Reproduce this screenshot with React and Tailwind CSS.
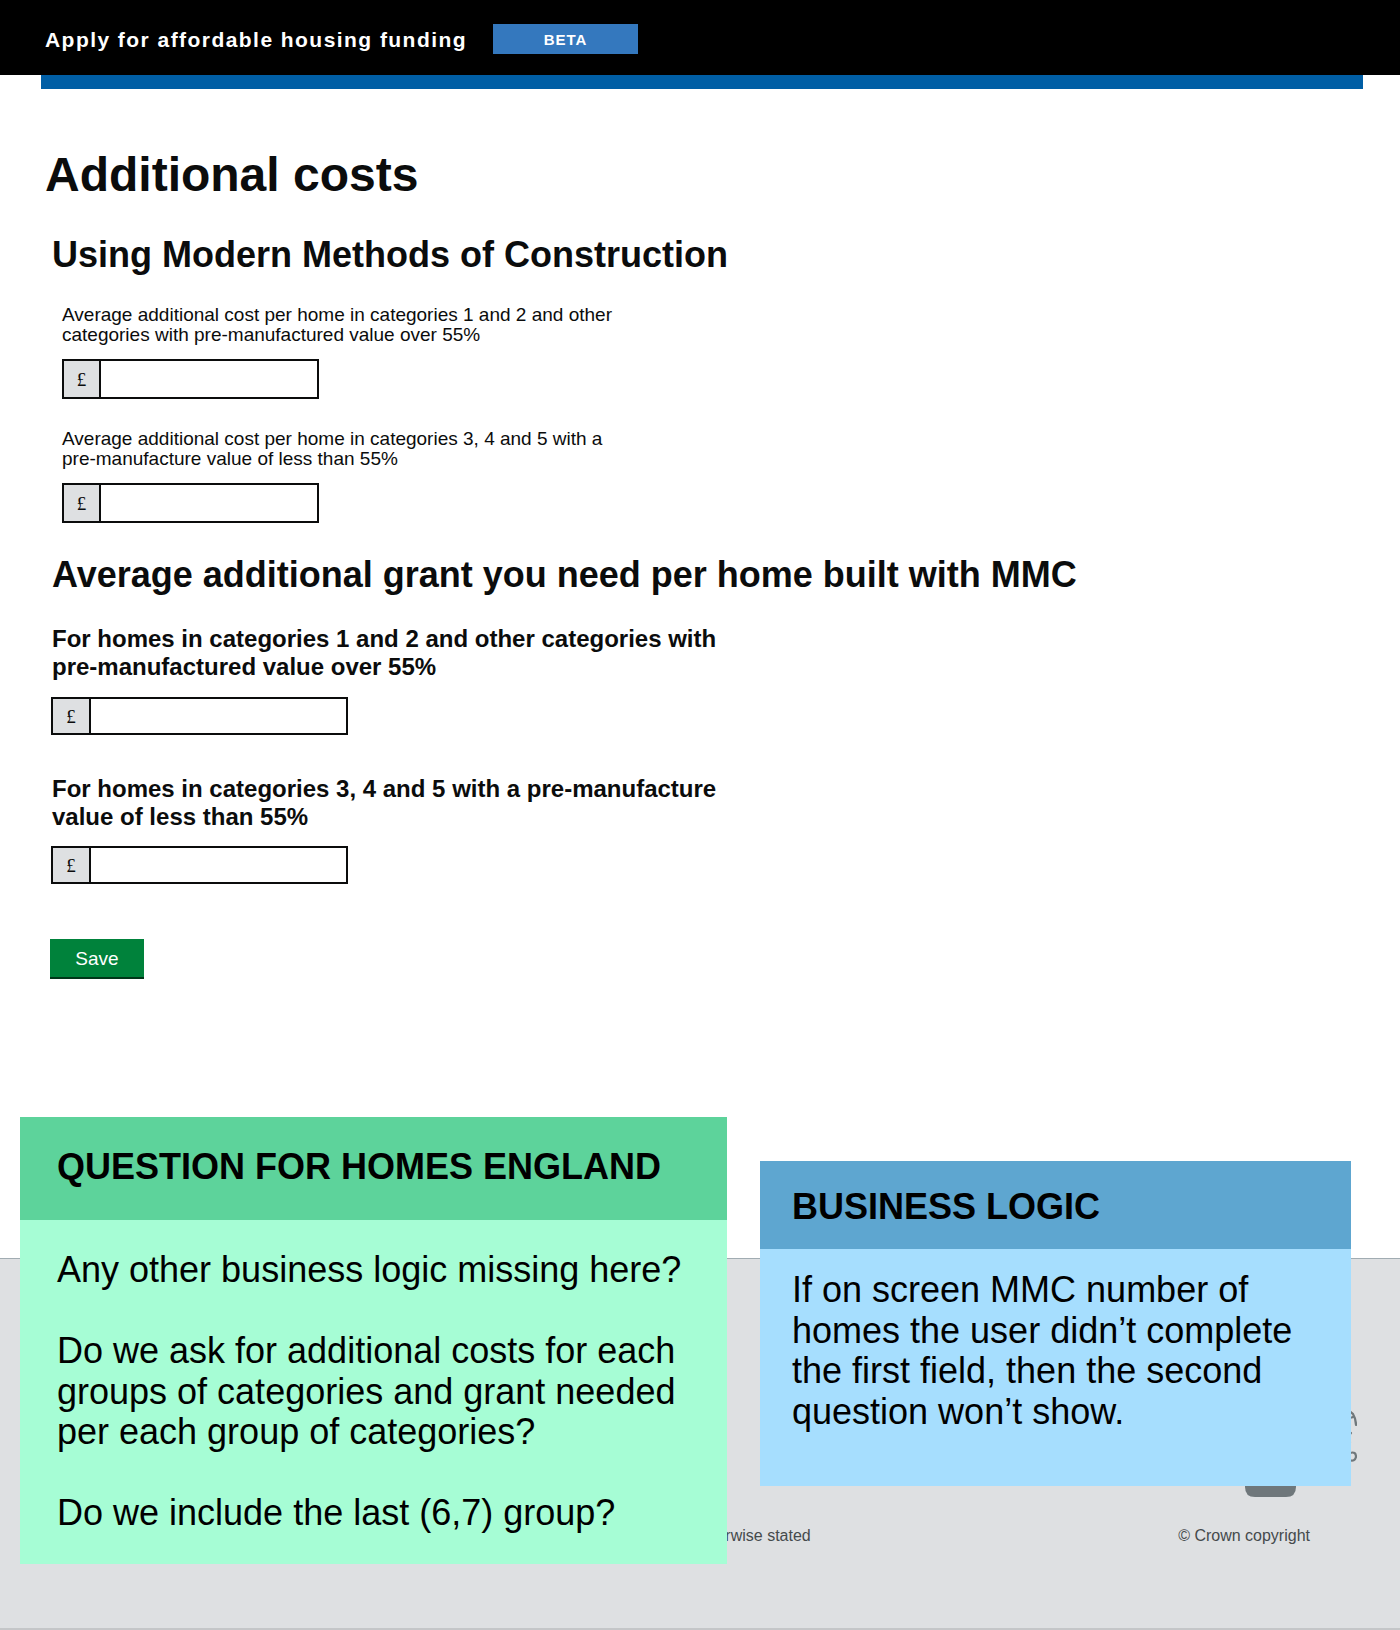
import React from "react";

function MoneyInputSmall() {
  return (
    <div className="flex w-[257px] h-[40px] border-2 border-[#0b0c0c] bg-white">
      <div className="w-[37px] h-full bg-[#dee0e2] border-r-2 border-[#0b0c0c] flex items-center justify-center text-[19px] leading-none text-[#0b0c0c] font-['Liberation_Serif','Times_New_Roman',serif]">
        £
      </div>
      <input type="text" className="flex-1 min-w-0 h-full border-0 outline-none bg-white px-2 text-[19px]" />
    </div>
  );
}

function MoneyInputWide() {
  return (
    <div className="flex w-[297px] h-[38px] border-2 border-[#0b0c0c] bg-white">
      <div className="w-[38px] h-full bg-[#dee0e2] border-r-2 border-[#0b0c0c] flex items-center justify-center text-[19px] leading-none text-[#0b0c0c] font-['Liberation_Serif','Times_New_Roman',serif]">
        £
      </div>
      <input type="text" className="flex-1 min-w-0 h-full border-0 outline-none bg-white px-2 text-[19px]" />
    </div>
  );
}

function Crest() {
  return (
    <svg width="172" height="140" viewBox="0 0 172 140" fill="none">
      <g fill="#6f777b">
        <path d="M60 112 h51 v18 q0 10 -10 10 h-31 q-10 0 -10 -10 z" />
        <path d="M70 40 h32 v40 q-16 16 -32 0 z" />
        <circle cx="86" cy="26" r="12" />
      </g>
      <g stroke="#6f777b" strokeWidth="2.2" fill="none" strokeLinecap="round">
        <path d="M156 57 q7 -6 12 0 q3 5 3 11" />
        <path d="M168 60 q-4 2 -6 -2" />
        <path d="M166 76 q-4 4 -1 9" />
        <path d="M165 96 q6 -2 6 4 q-1 5 -7 3" />
        <path d="M30 60 q-10 20 0 40" />
        <path d="M142 60 q10 20 0 40" />
      </g>
    </svg>
  );
}

function OglLogo() {
  return (
    <svg width="41" height="17" viewBox="0 0 41 17" fill="none">
      <g stroke="#454a4c" strokeWidth="2.5" fill="none">
        <ellipse cx="9" cy="8.5" rx="6.5" ry="6.5" />
        <ellipse cx="26" cy="8.5" rx="6.5" ry="6.5" />
      </g>
    </svg>
  );
}

export default function App() {
  return (
    <div className="relative w-[1400px] h-[1630px] bg-white text-[#0b0c0c] font-['Liberation_Sans',Arial,sans-serif] overflow-hidden">
      {/* Header */}
      <header className="h-[75px] bg-black flex">
        <div className="w-[493px] pl-[45px] pt-[28px]">
          <span className="block text-[21px] leading-[24px] font-bold text-white tracking-[1.45px] whitespace-nowrap">
            Apply for affordable housing funding
          </span>
        </div>
        <div className="mt-[24px] w-[145px] h-[30px] bg-[#3478be] flex items-center justify-center text-white text-[15px] leading-none font-bold tracking-[1px]">
          BETA
        </div>
      </header>
      <div className="ml-[41px] w-[1322px] h-[14px] bg-[#005ea5]" />

      {/* Main */}
      <main className="h-[1169px] flex flex-col items-start">
        <h1 className="ml-[45px] mt-[62px] text-[48px] leading-[48px] font-bold">Additional costs</h1>

        <h2 className="ml-[52px] mt-[36px] text-[36px] leading-[40px] font-bold whitespace-nowrap">
          Using Modern Methods of Construction
        </h2>

        <label className="ml-[62px] mt-[30px] w-[600px] text-[19px] leading-[20px]">
          Average additional cost per home in categories 1 and 2 and other categories with{" "}
          <span className="whitespace-nowrap">pre-manufactured</span> value over 55%
        </label>
        <div className="ml-[62px] mt-[14px]">
          <MoneyInputSmall />
        </div>

        <label className="ml-[62px] mt-[30px] w-[600px] text-[19px] leading-[20px]">
          Average additional cost per home in categories 3, 4 and 5 with a{" "}
          <span className="whitespace-nowrap">pre-manufacture</span> value of less than 55%
        </label>
        <div className="ml-[62px] mt-[14px]">
          <MoneyInputSmall />
        </div>

        <h2 className="ml-[52px] mt-[32px] text-[36px] leading-[40px] font-bold whitespace-nowrap">
          Average additional grant you need per home built with MMC
        </h2>

        <label className="ml-[52px] mt-[30px] w-[700px] text-[24px] leading-[28px] font-bold">
          For homes in categories 1 and 2 and other categories with{" "}
          <span className="whitespace-nowrap">pre-manufactured</span> value over 55%
        </label>
        <div className="ml-[51px] mt-[16px]">
          <MoneyInputWide />
        </div>

        <label className="ml-[52px] mt-[40px] w-[700px] text-[24px] leading-[28px] font-bold">
          For homes in categories 3, 4 and 5 with a{" "}
          <span className="whitespace-nowrap">pre-manufacture</span> value of less than 55%
        </label>
        <div className="ml-[51px] mt-[15px]">
          <MoneyInputWide />
        </div>

        <button className="ml-[50px] mt-[55px] w-[94px] h-[38px] bg-[#00823b] text-white text-[19px] leading-none shadow-[0_2px_0_#003618]">
          Save
        </button>
      </main>

      {/* Footer */}
      <footer className="h-[372px] bg-[#dee0e2] border-t border-b-2 border-t-[#a1acb2] border-b-[#c4c6c8] flex items-start justify-between pt-[98px] pl-[45px] pr-[43px]">
        <div className="mt-[169px] flex items-center">
          <OglLogo />
          <span className="ml-[39px] text-[16px] leading-[20px] text-[#454a4c] whitespace-nowrap">
            All content is available under the Open Government Licence v3.0, except where otherwise stated
          </span>
        </div>
        <div className="flex flex-col items-end">
          <Crest />
          <span className="mt-[29px] mr-[47px] text-[16px] leading-[20px] text-[#454a4c] whitespace-nowrap">
            © Crown copyright
          </span>
        </div>
      </footer>

      {/* Annotation: question */}
      <div className="absolute left-[20px] top-[1117px] w-[707px] flex flex-col">
        <div className="h-[103px] bg-[#5dd39b] pl-[37px] pt-[30px] text-[36px] leading-[40px] font-bold text-black">
          QUESTION FOR HOMES ENGLAND
        </div>
        <div className="bg-[#a6fdd5] pl-[37px] pr-[37px] pt-[30px] pb-[30px] text-[36px] leading-[40.5px] text-black">
          <p>Any other business logic missing here?</p>
          <p className="mt-[40.5px]">
            Do we ask for additional costs for each groups of categories and grant needed per each group of categories?
          </p>
          <p className="mt-[40.5px]">Do we include the last (6,7) group?</p>
        </div>
      </div>

      {/* Annotation: business logic */}
      <div className="absolute left-[760px] top-[1161px] w-[591px] h-[325px] flex flex-col">
        <div className="h-[88px] bg-[#5ea6d0] pl-[32px] pt-[26px] text-[36px] leading-[40px] font-bold text-black">
          BUSINESS LOGIC
        </div>
        <div className="flex-1 bg-[#a6defe] pl-[32px] pr-[32px] pt-[21px] text-[36px] leading-[40.5px] text-black">
          If on screen MMC number of homes the user didn’t complete the first field, then the second question won’t show.
        </div>
      </div>
    </div>
  );
}
